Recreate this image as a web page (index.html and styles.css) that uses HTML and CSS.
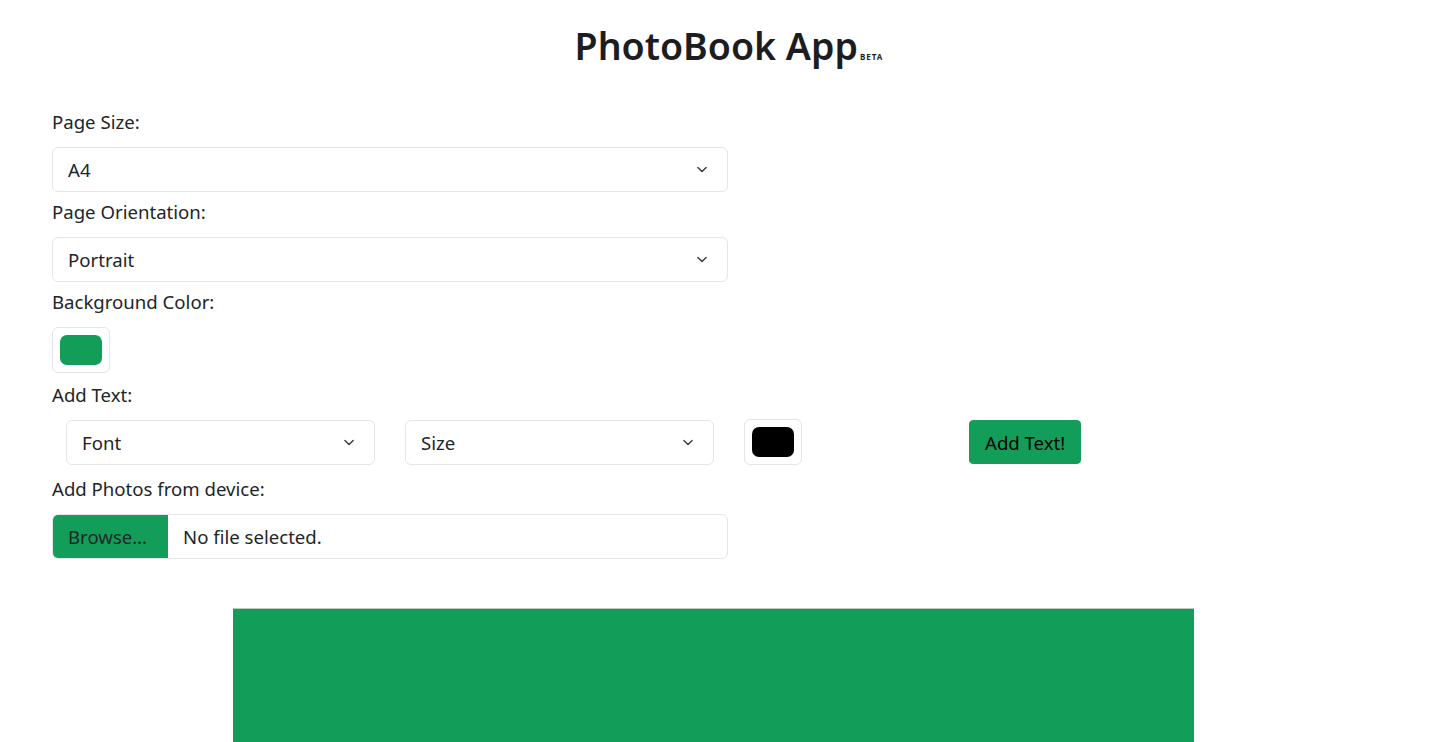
FILE: index.html
```html
<!DOCTYPE html>
<html>
<head>
  <title>PhotoBook App</title>
  <link rel="stylesheet" href="styles.css">
</head>
<body>
  <h1 class="title">PhotoBook App<span class="beta">BETA</span></h1>

  <div class="controls">
    <label class="field-label" for="pageSize">Page Size:</label>
    <select id="pageSize" class="form-select wide">
      <option>A4</option>
      <option>A5</option>
      <option>Letter</option>
    </select>

    <label class="field-label" for="orientation">Page Orientation:</label>
    <select id="orientation" class="form-select wide">
      <option>Portrait</option>
      <option>Landscape</option>
    </select>

    <label class="field-label">Background Color:</label>
    <div class="color-box spaced"><span class="swatch bg-green"></span></div>

    <label class="field-label">Add Text:</label>
    <div class="text-row">
      <select class="form-select narrow">
        <option>Font</option>
      </select>
      <select class="form-select narrow">
        <option>Size</option>
      </select>
      <div class="color-box"><span class="swatch bg-black"></span></div>
      <button class="btn-add" type="button">Add Text!</button>
    </div>

    <label class="field-label">Add Photos from device:</label>
    <div class="file-input">
      <span class="file-btn">Browse…</span>
      <span class="file-name">No file selected.</span>
    </div>
  </div>

  <div class="page-canvas"></div>
</body>
</html>
```

FILE: styles.css
```css
body {
  margin: 0;
  font-family: "Noto Sans", "Open Sans", sans-serif;
  color: #212529;
  background: #fff;
  overflow: hidden;
}

.title {
  margin: 0;
  padding: 22px 0 0 8px;
  text-align: center;
  font-size: 37.5px;
  font-weight: 600;
  line-height: 48px;
  color: #1d1d1f;
}

.beta {
  font-size: 8px;
  font-weight: 700;
  letter-spacing: 1px;
  line-height: 1;
  margin-left: 2px;
}

.controls {
  padding: 31.5px 52px 0;
}

.field-label {
  display: block;
  font-size: 18.6px;
  line-height: 27px;
  margin: 6.5px 0 11.5px;
}

.form-select {
  appearance: none;
  height: 45px;
  padding: 0 40px 0 15px;
  font-family: inherit;
  font-size: 18.6px;
  color: #212529;
  background-color: #fff;
  background-image: url("data:image/svg+xml,%3csvg xmlns='http://www.w3.org/2000/svg' viewBox='0 0 16 16'%3e%3cpath fill='none' stroke='%23343a40' stroke-linecap='round' stroke-linejoin='round' stroke-width='2' d='m2 5 6 6 6-6'/%3e%3c/svg%3e");
  background-repeat: no-repeat;
  background-position: right 18px center;
  background-size: 14px 11px;
  border: 1px solid #e3e5e8;
  border-radius: 6px;
  display: block;
}

.wide {
  width: 676px;
}

.narrow {
  width: 309px;
}

.color-box {
  width: 58px;
  height: 46px;
  box-sizing: border-box;
  border: 1px solid #e3e5e8;
  border-radius: 6px;
  padding: 7px;
  display: flex;
}

.spaced {
  margin-bottom: 8px;
}

.swatch {
  flex: 1;
  border-radius: 7px;
}

.bg-green {
  background: #129e59;
}

.bg-black {
  background: #000;
}

.text-row {
  display: flex;
  align-items: center;
  gap: 30px;
  padding-left: 14px;
  margin-bottom: 10px;
}

.btn-add {
  margin-left: 137px;
  height: 44px;
  padding: 0 15px;
  font-family: inherit;
  font-size: 18.6px;
  color: #000;
  background: #129e59;
  border: 1px solid #129e59;
  border-radius: 4px;
  cursor: pointer;
}

.file-input {
  width: 676px;
  height: 45px;
  box-sizing: border-box;
  border: 1px solid #e3e5e8;
  border-radius: 6px;
  display: flex;
  align-items: stretch;
  overflow: hidden;
  font-size: 18.6px;
}

.file-btn {
  background: #129e59;
  padding: 0 15px;
  display: flex;
  align-items: center;
  width: 115px;
  box-sizing: border-box;
}

.file-name {
  display: flex;
  align-items: center;
  padding-left: 15px;
}

.page-canvas {
  margin: 49px 0 0 233px;
  width: 961px;
  height: 400px;
  background: #129e59;
  border-top: 1px solid #b9c9bf;
}
```
